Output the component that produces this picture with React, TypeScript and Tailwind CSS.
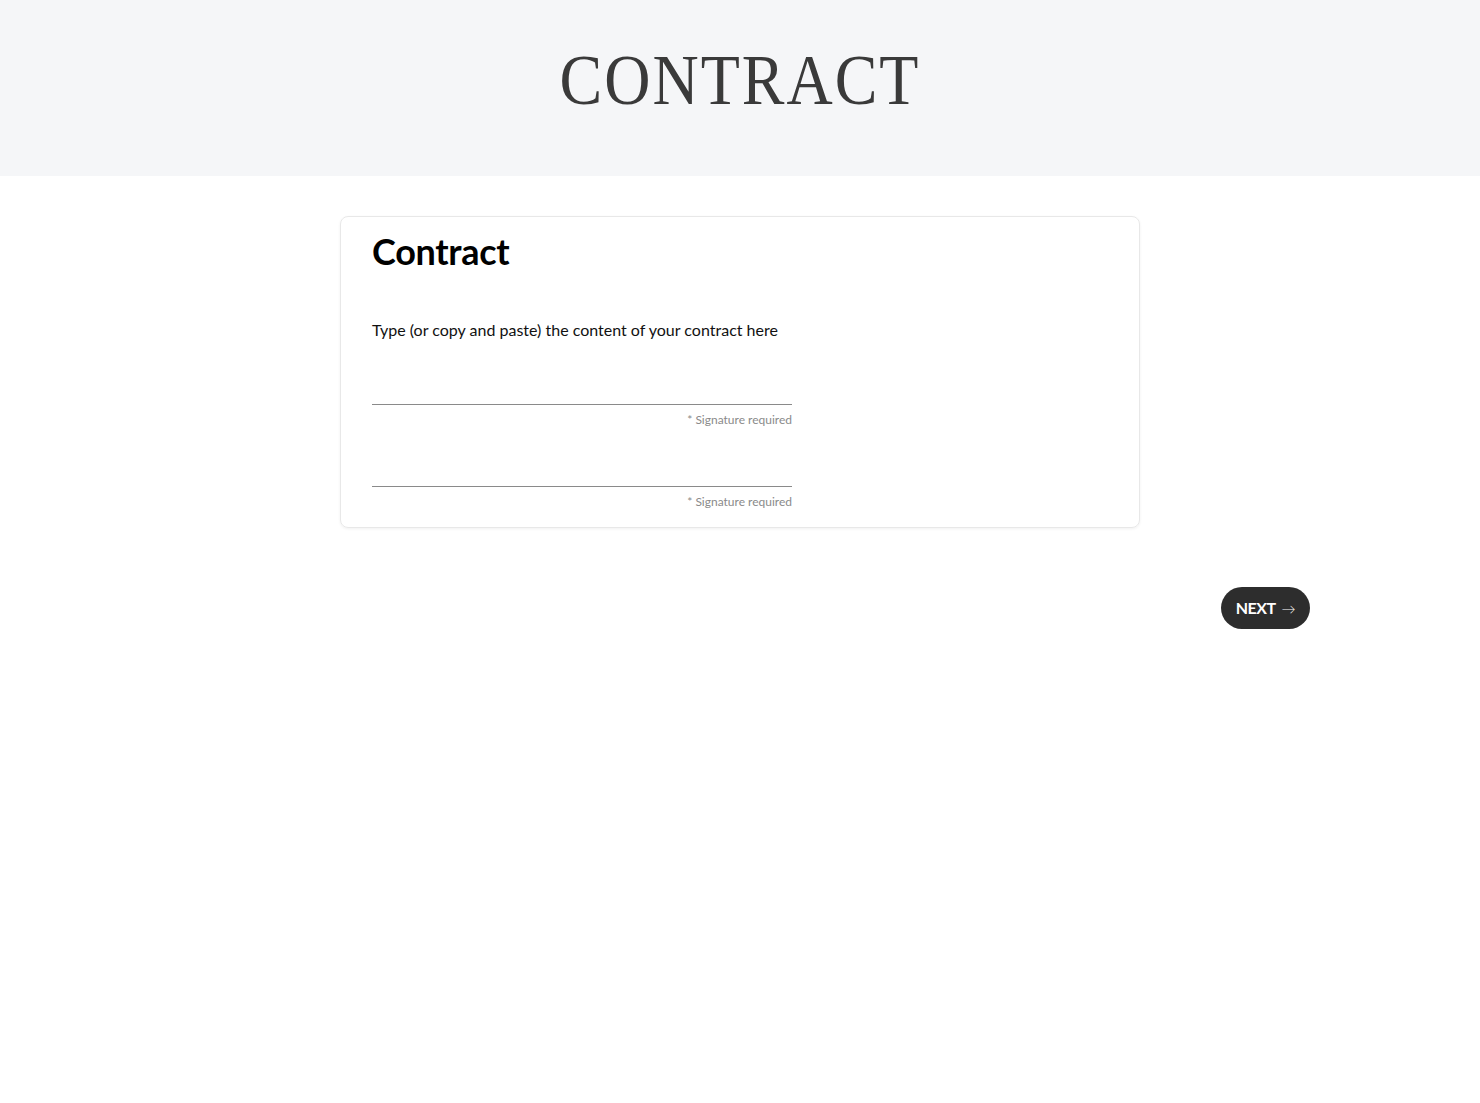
export default function App() {
  return (
    <div className="min-h-screen bg-white font-['Lato','Noto_Sans',sans-serif] text-black">
      <header className="h-[176px] bg-[#f5f6f8] flex justify-center pt-[45px]">
        <h1 className="font-['Liberation_Serif',serif] font-normal text-[64px] leading-none tracking-[2px] text-[#3a3a3a] scale-y-[1.12] origin-top">
          CONTRACT
        </h1>
      </header>

      <main className="w-[800px] mx-auto mt-[40px]">
        <section className="border border-[#e8e8e8] rounded-[8px] shadow-[0_1px_3px_rgba(0,0,0,0.06)] px-[31px] pt-[12px] pb-[18px]">
          <h2 className="text-[36px] font-bold leading-[44px] tracking-[-0.3px]">Contract</h2>
          <p className="mt-[47px] text-[16px] leading-[20px] text-[#111]">
            Type (or copy and paste) the content of your contract here
          </p>

          <div className="w-[420px] mt-[64px]">
            <div className="border-b border-[#8a8a8a]" />
            <p className="text-right text-[12px] text-[#8a8a8a] mt-[8px] leading-[14px]">* Signature required</p>
          </div>
          <div className="w-[420px] mt-[59px]">
            <div className="border-b border-[#8a8a8a]" />
            <p className="text-right text-[12px] text-[#8a8a8a] mt-[8px] leading-[14px]">* Signature required</p>
          </div>
        </section>
      </main>

      <div className="flex justify-end pr-[170px] mt-[59px]">
        <button className="h-[42px] px-[15px] rounded-full bg-[#2d2d2d] text-white text-[16px] font-bold tracking-[-0.5px] flex items-center gap-[6px]">
          NEXT <span className="font-light text-[14px]">→</span>
        </button>
      </div>
    </div>
  )
}
